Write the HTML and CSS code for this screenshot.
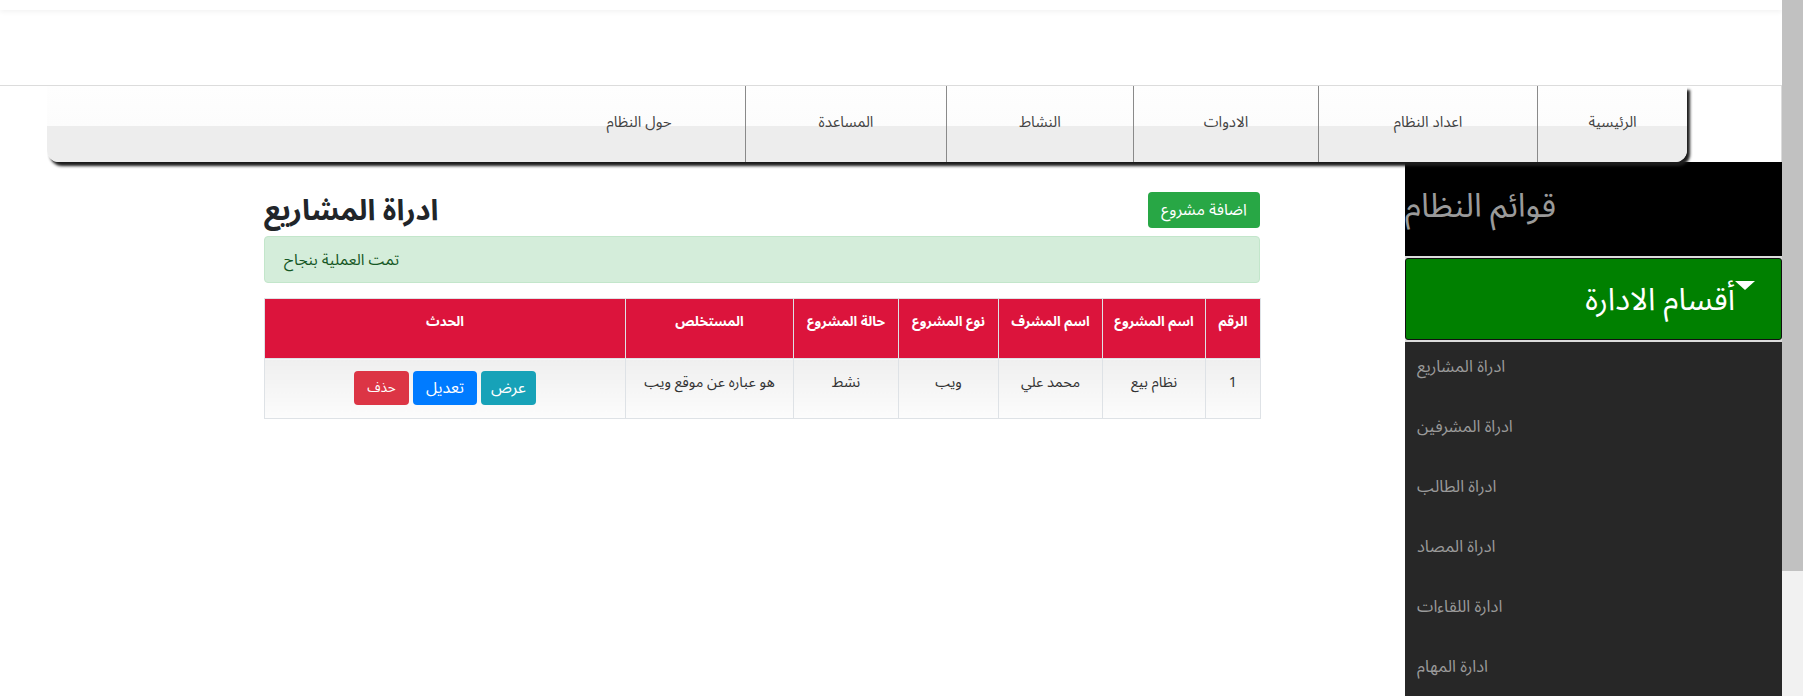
FILE: index.html
```html
<!DOCTYPE html>
<html lang="ar">
<head>
<meta charset="utf-8">
<title>ادراة المشاريع</title>
<link rel="stylesheet" href="styles.css">
</head>
<body>
<div class="page">
  <div class="topbar"></div>
  <div class="navwrap">
    <ul class="nav" dir="rtl">
      <li class="nav-item n1">الرئيسية</li>
      <li class="nav-item n2">اعداد النظام</li>
      <li class="nav-item n3">الادوات</li>
      <li class="nav-item n4">النشاط</li>
      <li class="nav-item n5">المساعدة</li>
      <li class="nav-item n6 last">حول النظام</li>
    </ul>
  </div>
  <div class="layout">
    <main class="main">
      <div class="content">
        <div class="head-row">
          <h1 class="title">ادراة المشاريع</h1>
          <a class="btn btn-add">اضافة مشروع</a>
        </div>
        <div class="alert">تمت العملية بنجاح</div>
        <table class="grid" dir="rtl">
          <colgroup>
            <col class="c-num"><col class="c-name"><col class="c-sup"><col class="c-type"><col class="c-state"><col class="c-abs"><col class="c-act">
          </colgroup>
          <thead>
            <tr>
              <th>الرقم</th>
              <th>اسم المشروع</th>
              <th>اسم المشرف</th>
              <th>نوع المشروع</th>
              <th>حالة المشروع</th>
              <th>المستخلص</th>
              <th>الحدث</th>
            </tr>
          </thead>
          <tbody>
            <tr>
              <td>1</td>
              <td>نظام بيع</td>
              <td>محمد علي</td>
              <td>ويب</td>
              <td>نشط</td>
              <td>هو عباره عن موقع ويب</td>
              <td>
                <div class="actions">
                  <a class="btn btn-view">عرض</a>
                  <a class="btn btn-edit">تعديل</a>
                  <a class="btn btn-del">حذف</a>
                </div>
              </td>
            </tr>
          </tbody>
        </table>
      </div>
    </main>
    <aside class="sidebar">
      <div class="side-title" dir="rtl">قوائم النظام</div>
      <div class="side-group" dir="rtl"><span class="caret"></span>أقسام الادارة</div>
      <ul class="side-list" dir="rtl">
        <li>ادراة المشاريع</li>
        <li>ادراة المشرفين</li>
        <li>ادراة الطالب</li>
        <li>ادراة المصاد</li>
        <li>ادارة اللقاءات</li>
        <li>ادارة المهام</li>
      </ul>
    </aside>
  </div>
</div>
<div class="scrollbar"><div class="thumb"></div></div>
</body>
</html>
```

FILE: styles.css
```css
* { box-sizing: border-box; }
html, body { margin: 0; padding: 0; }
body {
  background: #fff;
  overflow: hidden;
  font-family: "Noto Sans Arabic", "DejaVu Sans", "Noto Sans", sans-serif;
  color: #212529;
  font-size: 15px;
}
.page { width: 1782px; }

.topbar {
  height: 10px;
  background: #fff;
  box-shadow: 0 2px 5px rgba(0, 0, 0, 0.05);
}

.navwrap {
  margin-top: 75px;
  height: 77px;
  border-top: 1px solid #dcdcdc;
  border-right: 1px solid #dcdcdc;
  padding-left: 47px;
  position: relative;
  z-index: 2;
}
.nav {
  list-style: none;
  margin: 0;
  padding: 0;
  width: 1640px;
  height: 76px;
  display: flex;
  background: linear-gradient(to bottom, #fefefe 0, #fcfcfc 52%, #ededed 52%, #ededed 100%);
  border-radius: 0 0 12px 12px;
  box-shadow: 3px 4px 3px #1c1c1c;
}
.nav-item {
  height: 100%;
  display: flex;
  align-items: center;
  justify-content: center;
  padding-bottom: 5px;
  color: #444;
  font-size: 15px;
  border-left: 1px solid #8a8a8a;
}
.nav-item.last { border-left: none; }
.n1 { width: 150px; }
.n2 { width: 219px; }
.n3 { width: 185px; }
.n4 { width: 187px; }
.n5 { width: 201px; }
.n6 { width: 212px; }

.layout { display: flex; align-items: stretch; }
.main { flex: 1; padding-left: 264px; }
.content { width: 996px; padding-top: 30px; }

.head-row {
  display: flex;
  justify-content: space-between;
  align-items: flex-end;
}
.title {
  margin: 0;
  font-size: 29px;
  font-weight: bold;
  line-height: 34px;
  color: #212529;
}
.btn {
  display: inline-flex;
  align-items: center;
  justify-content: center;
  color: #fff;
  border-radius: 4px;
  text-decoration: none;
  white-space: nowrap;
}
.btn-add {
  width: 112px;
  height: 36px;
  background: #28a745;
  font-size: 16px;
}

.alert {
  margin-top: 8px;
  height: 47px;
  padding: 0 19px;
  display: flex;
  align-items: center;
  background: #d4edda;
  border: 1px solid #c3e6cb;
  border-radius: 4px;
  color: #155724;
  font-size: 15.5px;
}

.grid {
  margin-top: 15px;
  width: 996px;
  border-collapse: collapse;
  table-layout: fixed;
}
.c-num { width: 55px; }
.c-name { width: 103px; }
.c-sup { width: 104px; }
.c-type { width: 100px; }
.c-state { width: 105px; }
.c-abs { width: 168px; }
.c-act { width: 361px; }
.grid th, .grid td {
  border: 1px solid #dee2e6;
  text-align: center;
  vertical-align: top;
  padding: 11px 4px 0;
  line-height: 24px;
}
.grid th {
  height: 60px;
  background: #dc143c;
  color: #fff;
  font-size: 13.5px;
  font-weight: bold;
}
.grid td {
  height: 60px;
  padding-top: 12px;
  background: linear-gradient(to bottom, #efefef, #fcfcfc);
  color: #333;
  font-size: 14.5px;
}
.actions {
  display: flex;
  justify-content: center;
  gap: 4px;
}
.btn-view, .btn-edit, .btn-del { height: 34px; }
.btn-view { width: 55px; background: #17a2b8; font-size: 16px; }
.btn-edit { width: 64px; background: #007bff; font-size: 16px; }
.btn-del { width: 55px; background: #dc3545; font-size: 13.5px; }

.sidebar {
  width: 377px;
  flex: none;
  background: #dcdcdc;
  display: flex;
  flex-direction: column;
}
.side-title {
  height: 94px;
  background: #000;
  color: #9a9a9a;
  font-size: 33px;
  line-height: 44px;
  padding-top: 23px;
  text-align: left;
  margin-bottom: 2px;
  white-space: nowrap;
}
.side-group {
  height: 82px;
  background: #008000;
  border: 1px solid #111;
  border-radius: 3px;
  color: #fff;
  font-size: 31px;
  display: flex;
  align-items: center;
  padding-right: 26px;
  padding-top: 2px;
  margin-bottom: 2px;
}
.caret {
  width: 0;
  height: 0;
  border-left: 10px solid transparent;
  border-right: 10px solid transparent;
  border-top: 9px solid #fff;
  align-self: flex-start;
  margin-top: 20px;
}
.side-list {
  list-style: none;
  margin: 0;
  padding: 0;
  background: #272727;
  flex: 1;
}
.side-list li {
  height: 60px;
  line-height: 50px;
  padding-left: 12px;
  text-align: left;
  color: #9a9a9a;
  font-size: 16.5px;
}

.scrollbar {
  position: fixed;
  top: 0;
  right: 0;
  width: 21px;
  height: 100%;
  background: #f1f1f1;
}
.thumb {
  height: 571px;
  background: #c1c1c1;
}
```
